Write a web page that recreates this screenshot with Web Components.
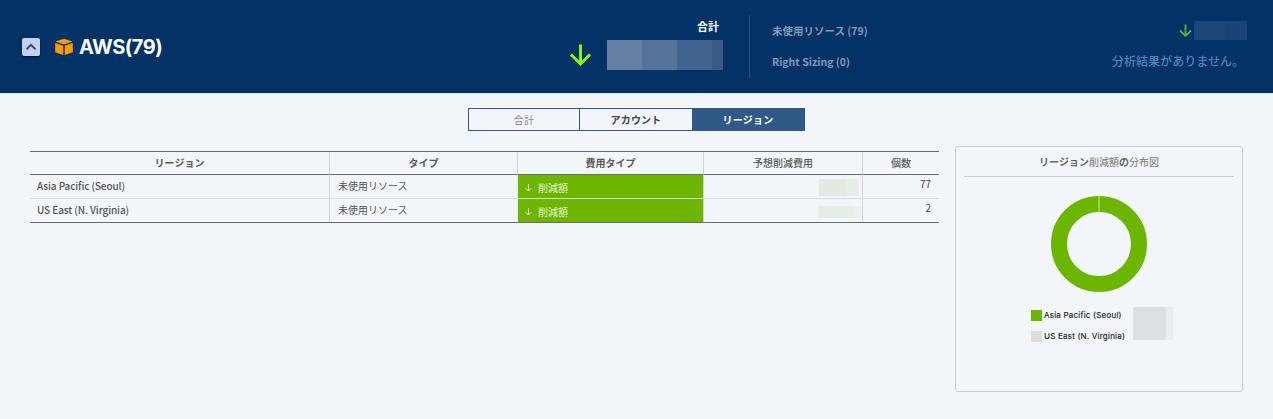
<!DOCTYPE html>
<html lang="ja"><head><meta charset="utf-8"><title>AWS</title>
<style>
html,body{margin:0;padding:0;background:#f2f5fa;height:100%;overflow:hidden}
body{font-family:"Noto Sans CJK JP","Noto Sans",sans-serif;color:#555}
</style></head><body>
<app-header></app-header>
<seg-tabs></seg-tabs>
<main-area></main-area>
<script>
const FONT='"Noto Sans CJK JP","Noto Sans",sans-serif';
class Base extends HTMLElement{
  html(s){this.attachShadow({mode:'open'}).innerHTML=s}
}
customElements.define('app-header',class extends Base{connectedCallback(){this.html(`<style>
:host{display:flex;height:93px;background:#033266;border-bottom:1px solid #dfe7f5;font-family:${FONT};align-items:stretch;box-sizing:content-box}
.left{display:flex;align-items:center;padding-left:22px;width:569px;box-sizing:border-box}
.btn{width:18px;height:18px;border-radius:2px;background:#c5d0ec;box-shadow:0 1px 2px #00122c;display:flex;align-items:center;justify-content:center;margin-right:15px}
.cube{margin-right:6px;display:block}
.aws{font:700 20px/24px Inter,"Open Sans",sans-serif;color:#fff;letter-spacing:-.5px}
.total{width:178px;display:grid;grid-template-columns:38px 116px;grid-template-rows:23px 30px;align-content:start;padding-top:17px;box-sizing:border-box}
.total .lab{grid-column:2;text-align:right;padding-right:4px;font:700 11px/19px ${FONT};color:#fff;height:23px}
.total svg{align-self:start;margin-top:3px}
.blur{height:30px;background:linear-gradient(90deg,#6580a3 0 35px,#567399 35px 70px,#42658f 70px 105px,#385a85 105px)}
.div{width:1px;height:63px;margin:15px 0 0 2px;background:#2a5382}
.mid{width:340px;padding:21px 0 0 22px;box-sizing:border-box;font:700 10.5px/19px ${FONT};color:#8299b7}
.mid div+div{margin-top:12px}
.right{flex:1;padding-top:21px;box-sizing:border-box}
.r1{display:flex;align-items:center;margin-left:89px}
.r1 svg{margin-right:2px}
.b2{width:53px;height:19px;background:linear-gradient(90deg,#1c4779 0 31px,#1a4474 31px)}
.msg{margin:11px 0 0 22px;font:500 12px/20px ${FONT};color:#5284ba;letter-spacing:.03px}
</style>
<div class="left">
<div class="btn"><svg width="12" height="8" viewBox="0 0 12 8"><path d="M1.5 6.2 6 1.8l4.5 4.4" fill="none" stroke="#2c4f84" stroke-width="2"/></svg></div>
<svg class="cube" width="18" height="18" viewBox="0 0 18 18"><path d="M9 .8 17.6 3.6 9 6.6.4 3.6z" fill="#ff9900"/><path d="M.2 5 8.3 7.8V17L.2 14.3zM17.8 5 9.7 7.8V17l8.1-2.7z" fill="#ff9900"/></svg>
<span class="aws">AWS(79)</span>
</div>
<div class="total">
<span class="lab">合計</span>
<svg style="grid-column:1;grid-row:2" width="23" height="23" viewBox="0 0 23 23"><path d="M11.5 1.5v19M2 11.5l9.5 9.5 9.5-9.5" fill="none" stroke="#85f520" stroke-width="3"/></svg>
<div class="blur" style="grid-column:2;grid-row:2"></div>
</div>
<div class="div"></div>
<div class="mid"><div>未使用リソース (79)</div><div>Right Sizing (0)</div></div>
<div class="right">
<div class="r1"><svg width="13" height="13" viewBox="0 0 13 13"><path d="M6.5 .5v11M1 6.5l5.5 5.5L12 6.5" fill="none" stroke="#56b13c" stroke-width="1.8"/></svg><div class="b2"></div></div>
<div class="msg">分析結果がありません。</div>
</div>`)}});

customElements.define('seg-tabs',class extends Base{connectedCallback(){this.html(`<style>
:host{display:flex;justify-content:center;margin:14px 0 0 0;font-family:${FONT}}
.w{display:flex;border:1px solid #2f5a88;height:21px;width:335px}
.t{display:flex;align-items:center;justify-content:center;font:400 10px/1 ${FONT};color:#888;letter-spacing:.2px}
.a{width:110px;border-right:1px solid #2f5a88}
.x{width:112px;font-weight:700;color:#444}
.y{flex:1;background:#2f5a88;color:#fff;font-weight:700}
</style><div class="w"><div class="t a">合計</div><div class="t x">アカウント</div><div class="t y">リージョン</div></div>`)}});

customElements.define('main-area',class extends Base{connectedCallback(){this.html(`<style>
:host{display:flex;padding:15px 30px 0 30px;gap:16px;align-items:flex-start}
</style><cost-table></cost-table><dist-card></dist-card>`)}});

customElements.define('cost-table',class extends Base{connectedCallback(){this.html(`<style>
:host{display:block;width:909px;margin-top:5px;font-family:${FONT}}
.g{display:grid;grid-template-columns:299px 188px 186px 159px 77px;border-top:1px solid #686b70;border-bottom:1px solid #686b70}
.c{font:400 10px/14px ${FONT};color:#555;box-sizing:border-box;border-left:1px solid #cfd2d6;height:23px;padding:4px 0 0 8px}
.c:nth-child(5n+1){border-left:0}
.h{height:23px;border-bottom:1px solid #686b70;text-align:center;padding:4px 0 0;font-weight:500;color:#5a5a5a}
.h.st{font-weight:700}
.r1{height:24px;border-bottom:1px solid #d8dce2}
.name{font-weight:500;padding-left:7px;color:#555;letter-spacing:-.1px}
.g2{background:#6db600;color:#e8f5d0;display:flex;align-items:center;padding:2px 0 0 7px;border-left:1px solid #e8eef0}
.g2 svg{margin-right:6px}
.blurc{position:relative;padding:0}
.sm{position:absolute;top:4px}
.n{text-align:right;padding:0 8px 0 0;line-height:17px;color:#444}
</style>
<div class="g">
<div class="c h st">リージョン</div><div class="c h st">タイプ</div><div class="c h st">費用タイプ</div><div class="c h">予想削減費用</div><div class="c h">個数</div>
<div class="c r1 name">Asia Pacific (Seoul)</div><div class="c r1">未使用リソース</div>
<div class="c r1 g2"><svg width="7" height="8" viewBox="0 0 7 8"><path d="M3.5 .5v6.5M.8 4.3l2.7 2.7 2.7-2.7" fill="none" stroke="#e8f5d0" stroke-width="1"/></svg>削減額</div>
<div class="c r1 blurc"><div class="sm" style="right:3px;width:40px;height:17px;background:linear-gradient(90deg,#e0ebe2 0 27px,#e5eee7 27px)"></div></div>
<div class="c r1 n">77</div>
<div class="c name">US East (N. Virginia)</div><div class="c">未使用リソース</div>
<div class="c g2"><svg width="7" height="8" viewBox="0 0 7 8"><path d="M3.5 .5v6.5M.8 4.3l2.7 2.7 2.7-2.7" fill="none" stroke="#e8f5d0" stroke-width="1"/></svg>削減額</div>
<div class="c blurc"><div class="sm" style="right:1px;top:7px;width:43px;height:12px;background:linear-gradient(90deg,#e4eee7 0 35px,#e9f0ee 35px)"></div></div>
<div class="c n">2</div>
</div>`)}});

customElements.define('dist-card',class extends Base{connectedCallback(){this.html(`<style>
:host{display:block;width:288px;height:246px;box-sizing:border-box;border:1px solid #c9cbce;border-radius:3px;padding:0 8px;font-family:${FONT}}
.t{height:29px;border-bottom:1px solid #ccc;text-align:center;font:700 10px/30px ${FONT};color:#666}
.t span{font-weight:400;color:#777}
svg.d{display:block;margin:19px auto 0}
.s{width:11px;height:11px;margin-right:2px}
.l{font:400 8px/11px Inter,"Open Sans",sans-serif;color:#222;letter-spacing:.22px;-webkit-text-stroke:.15px #222}
.row{display:flex;align-items:center;height:21px}
.legw{display:flex;margin:0 0 0 67px;position:relative;padding-top:13px}
.blk{position:absolute;left:102px;top:15px;width:40px;height:33px;background:linear-gradient(90deg,#dde0e3 0 33px,#e9ecf0 33px)}
</style>
<div class="t">リージョン<span>削減額</span>の<span>分布図</span></div>
<svg class="d" width="96" height="96" viewBox="0 0 96 96"><circle cx="48" cy="48" r="40" fill="none" stroke="#6db600" stroke-width="16"/><rect x="47.5" y="0" width="1" height="16" fill="#cfe0b0"/></svg>
<div class="legw"><div><div class="row"><div class="s" style="background:#6db600"></div><span class="l">Asia Pacific (Seoul)</span></div><div class="row"><div class="s" style="background:#dcdcdc"></div><span class="l">US East (N. Virginia)</span></div></div><div class="blk"></div></div>`)}});
</script>
</body></html>
